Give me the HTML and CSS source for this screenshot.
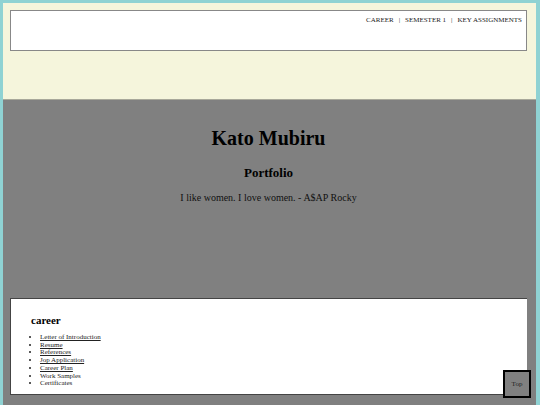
FILE: index.html
```html
<!DOCTYPE html>
<html>
<head>
<meta charset="utf-8">
<link rel="stylesheet" href="styles.css">
</head>
<body>
<div class="frame">
  <header class="top">
    <nav class="nav">
      <a>CAREER</a><span class="sep">|</span><a>SEMESTER 1</a><span class="sep">|</span><a>KEY ASSIGNMENTS</a>
    </nav>
  </header>
  <main class="main">
    <section class="hero">
      <h1 class="name">Kato Mubiru</h1>
      <h2 class="sub">Portfolio</h2>
      <p class="quote">I like women. I love women. - A$AP Rocky</p>
    </section>
    <section class="card">
      <h3 class="card-title">career</h3>
      <ul class="list">
        <li><a class="link">Letter of Introduction</a></li>
        <li><a class="link">Resume</a></li>
        <li><a class="link">References</a></li>
        <li><a class="link">Jop Application</a></li>
        <li><a class="link">Career Plan</a></li>
        <li>Work Samples</li>
        <li>Certificates</li>
      </ul>
    </section>
  </main>
  <a class="to-top">Top</a>
</div>
</body>
</html>
```
FILE: styles.css
```css
html, body {
  margin: 0;
  padding: 0;
}
body {
  background: #8fd2d3;
  font-family: "Liberation Serif", "Times New Roman", serif;
  color: #000;
  height: 405px;
  overflow: hidden;
}
.frame {
  margin: 3px 4px 0 3px;
  height: 402px;
  display: flex;
  flex-direction: column;
}
.top {
  background: #f5f5dc;
  padding: 7px 9px 0 7px;
  height: 97px;
  flex: none;
  box-sizing: border-box;
  border-bottom: 1px solid #a8a89a;
}
.nav {
  background: #fff;
  border: 1px solid #888;
  height: 41px;
  box-sizing: border-box;
  text-align: right;
  padding: 5px 4px 0 0;
  font-size: 7px;
  color: #222;
}
.sep {
  margin: 0 5px;
}
.main {
  flex: 1;
  background: #808080;
  padding: 0 9px 0 7px;
  display: flex;
  flex-direction: column;
}
.hero {
  height: 198px;
  flex: none;
  text-align: center;
  padding-top: 24px;
  box-sizing: border-box;
}
.name {
  font-size: 20px;
  margin: 0;
  line-height: 28px;
}
.sub {
  font-size: 13px;
  margin: 13px 0 0;
  line-height: 16px;
}
.quote {
  font-size: 10px;
  margin: 10px 0 0;
  line-height: 14px;
  color: #111;
}
.card {
  background: #fff;
  border-top: 1px solid #444;
  border-left: 1px solid #444;
  border-bottom: 1px solid #444;
  height: 97px;
  flex: none;
  box-sizing: border-box;
  padding: 14px 20px 0 20px;
}
.card-title {
  font-size: 11px;
  margin: 0 0 7px;
  line-height: 14px;
}
.list {
  margin: 0;
  padding-left: 9px;
  font-size: 7px;
  line-height: 7.7px;
  color: #222;
}
.link {
  color: #222;
  text-decoration: underline;
}
.to-top {
  position: fixed;
  left: 503px;
  top: 370px;
  width: 28px;
  height: 28px;
  box-sizing: border-box;
  border: 2px solid #000;
  background: #808080;
  font-size: 7px;
  color: #222;
  display: flex;
  align-items: center;
  justify-content: center;
}
```
